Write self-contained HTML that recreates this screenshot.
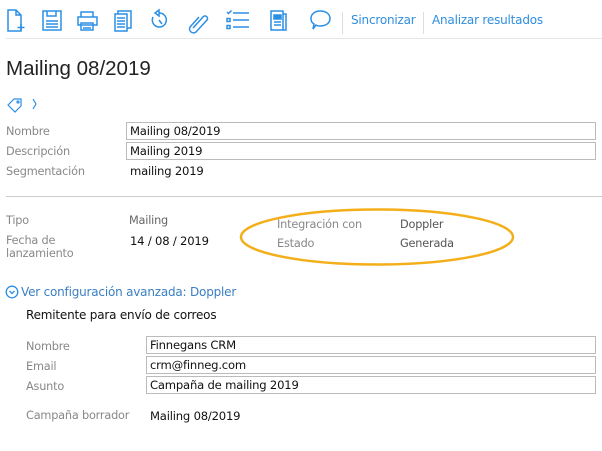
<!DOCTYPE html>
<html><head><meta charset="utf-8"><style>
body{margin:0;width:602px;height:451px;background:#fff;font-family:"DejaVu Sans","Liberation Sans",sans-serif;font-size:11.3px;letter-spacing:-0.2px;position:relative;overflow:hidden;color:#111}
.a{position:absolute;white-space:nowrap}
.l{color:#888}
.in{position:absolute;height:18px;border:1px solid #bbb;box-sizing:border-box;padding-left:3px;line-height:16px;color:#111;background:#fff;font-size:11.6px}
.bl{color:#2f8ee0}
</style></head><body>
<svg width="602" height="40" style="position:absolute;left:0;top:0" fill="none" stroke="#2c8fe6" stroke-width="1.5">
<path d="M8 10h8l5 5v16H8z M16 10v5h5"/><path d="M21 24v7M17.5 27.5h7"/>
<rect x="43" y="11" width="18" height="19"/><path d="M47 11v5h9v-5M46 21h12M46 24h12M46 27h12"/>
<path d="M81 17v-5h12v5M78 17h19v8H78zM81 23h12v7H81zM83 25h8M83 28h8"/>
<path d="M115 14h12v17h-12zM118 14v-3h13v17h-4M117 18h8M117 21h8M117 24h8M117 27h8"/>
<path d="M159 13a7 7 0 1 1-6 4M159 10v6l-4-3z M159 20l3 4"/>
<path d="M193 28l10-11a2.5 2.5 0 0 1 4 3l-11 12a4 4 0 0 1-6-5l9-10"/>
<path d="M233 13h16M233 20h16M233 27h16"/><rect x="231" y="18.5" width="3" height="3" transform="translate(-4 0)"/><rect x="231" y="25.5" width="3" height="3" transform="translate(-4 0)"/><path d="M227 12l1.5 1.5 3-3"/>
<path d="M271 11h12v19h-12z"/><rect x="274" y="15" width="7" height="4" fill="#2c8fe6"/><path d="M274 22h7M274 25h7M283 14h3v16h-3"/>
<path d="M320 11c6 0 10 3 10 7.5s-4 7.5-10 7.5c-2 0-3 0-4-1l-3 4 1-5c-2-1-3-3-3-5.5 0-4.5 4-7.5 9-7.5z"/>
</svg>
<div class="a" style="left:342px;top:12px;width:1px;height:22px;background:#ddd"></div>
<div class="a bl" style="left:351px;top:13px;font-size:12px">Sincronizar</div>
<div class="a" style="left:423px;top:12px;width:1px;height:22px;background:#ddd"></div>
<div class="a bl" style="left:432px;top:13px;font-size:12px">Analizar resultados</div>
<div class="a" style="left:6px;top:38px;width:596px;height:1px;background:#e6e6e6"></div>
<div class="a" style="left:6px;top:57px;font-size:20.5px;font-family:'Liberation Sans',sans-serif;letter-spacing:0;color:#222">Mailing 08/2019</div>
<svg width="40" height="16" style="position:absolute;left:6px;top:97px" fill="none" stroke="#2c8fe6" stroke-width="1.2"><path d="M2 8l6-6h7v7l-6 6z"/><circle cx="12" cy="5" r="1"/><path d="M27 2l3 5-3 5"/></svg>
<div class="a l" style="left:6px;top:125px">Nombre</div>
<div class="in" style="left:126px;top:122px;width:470px">Mailing 08/2019</div>
<div class="a l" style="left:6px;top:145px">Descripción</div>
<div class="in" style="left:126px;top:142px;width:470px">Mailing 2019</div>
<div class="a l" style="left:6px;top:165px">Segmentación</div>
<div class="a" style="left:130px;top:164px;font-size:11.6px">mailing 2019</div>
<div class="a" style="left:6px;top:196px;width:596px;height:1px;background:#ccc"></div>
<div class="a l" style="left:6px;top:214px">Tipo</div>
<div class="a" style="left:129px;top:214px;color:#666">Mailing</div>
<div class="a l" style="left:6px;top:234px;line-height:13px">Fecha de<br>lanzamiento</div>
<div class="a" style="left:130px;top:234px;font-size:11.6px">14 / 08 / 2019</div>
<svg width="290" height="64" style="position:absolute;left:236px;top:205px"><ellipse cx="141" cy="32" rx="136" ry="27.5" fill="none" stroke="#f4ae1a" stroke-width="2.5"/></svg>
<div class="a l" style="left:277px;top:218px">Integración con</div>
<div class="a" style="left:400px;top:218px;color:#555">Doppler</div>
<div class="a l" style="left:277px;top:237px">Estado</div>
<div class="a" style="left:400px;top:237px;color:#555">Generada</div>
<svg width="14" height="14" style="position:absolute;left:5px;top:285px" fill="none" stroke="#2c8fe6" stroke-width="1.3"><circle cx="7" cy="7" r="5.8"/><path d="M4.5 6l2.5 2.5L9.5 6"/></svg>
<div class="a" style="left:21px;top:285px;font-size:12px;color:#3a7fc2">Ver configuración avanzada: Doppler</div>
<div class="a" style="left:26px;top:308px;font-size:12px;color:#111">Remitente para envío de correos</div>
<div class="a l" style="left:26px;top:340px">Nombre</div>
<div class="in" style="left:146px;top:336px;width:450px">Finnegans CRM</div>
<div class="a l" style="left:26px;top:360px">Email</div>
<div class="in" style="left:146px;top:356px;width:450px">crm@finneg.com</div>
<div class="a l" style="left:26px;top:380px">Asunto</div>
<div class="in" style="left:146px;top:376px;width:450px">Campaña de mailing 2019</div>
<div class="a l" style="left:26px;top:409px">Campaña borrador</div>
<div class="a" style="left:150px;top:409px;font-size:11.6px">Mailing 08/2019</div>
</body></html>
